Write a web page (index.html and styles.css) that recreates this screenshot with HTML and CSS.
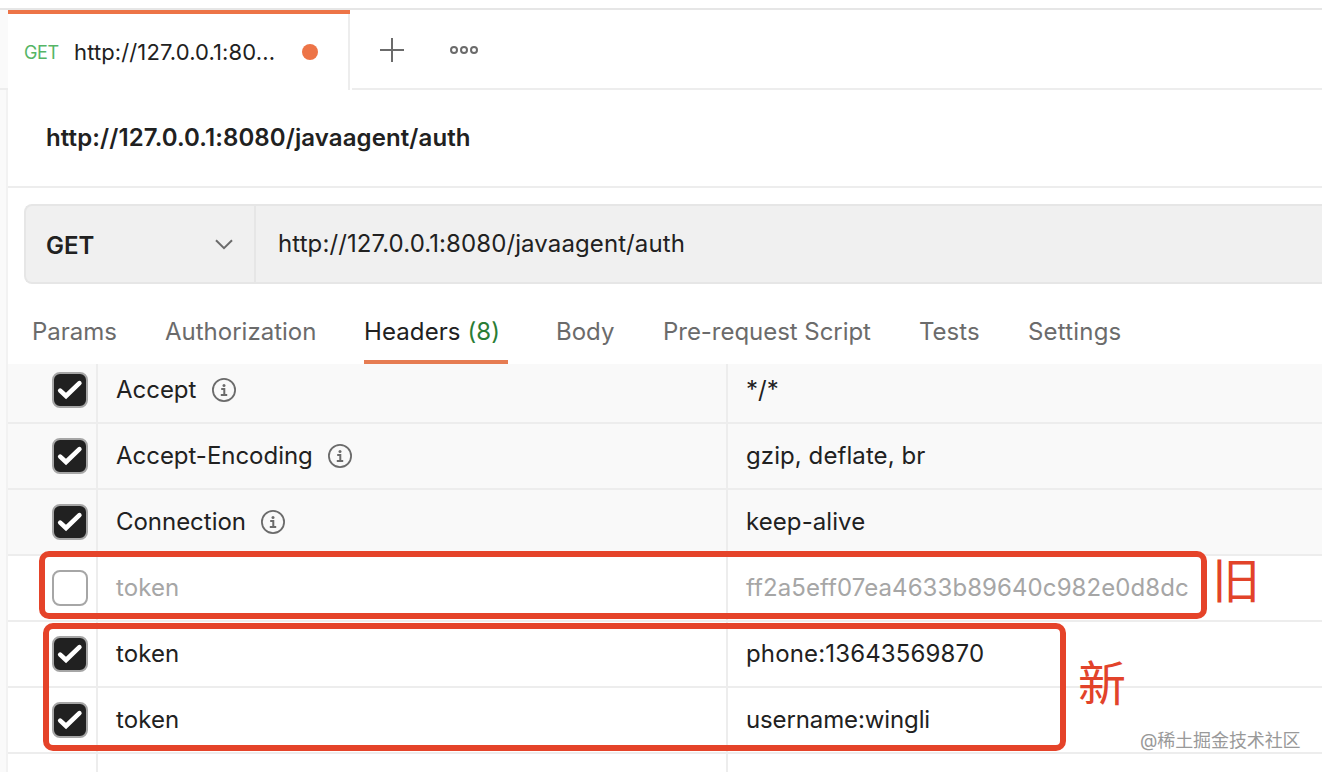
FILE: index.html
```
<!DOCTYPE html>
<html lang="en">
<head>
    <meta charset="UTF-8">
    <meta name="viewport" content="width=device-width, initial-scale=1.0">
    <title>http://127.0.0.1:8080/javaagent/auth</title>
    <link rel="stylesheet" href="styles.css">
</head>
<body>
    <!-- Shared icons -->
    <svg class="icon-defs" width="0" height="0">
        <symbol id="icon-check" viewBox="0 0 32 32">
            <path d="M6.2 16.6 L12 22 L25.4 9.2" fill="none" stroke="#fff" stroke-width="4.6" stroke-linecap="round" stroke-linejoin="miter"/>
        </symbol>
        <symbol id="icon-info" viewBox="0 0 24 24">
            <circle cx="12" cy="12" r="11.1" fill="none" stroke="#6b6b6b" stroke-width="1.8"/>
            <path d="M9.2 11 H12.3 V17 M8.8 17 H15.2" fill="none" stroke="#6b6b6b" stroke-width="2"/>
            <circle cx="12" cy="7.4" r="1.5" fill="#6b6b6b"/>
        </symbol>
    </svg>

    <div id="tab-bar">
        <div class="tab">
            <span class="tab-method">GET</span>
            <span class="tab-title">http://127.0.0.1:80...</span>
            <span class="unsaved"></span>
        </div>
        <div class="tab-actions">
            <svg width="24" height="24" viewBox="0 0 24 24"><path d="M12 0 V24 M0 12 H24" stroke="#6b6b6b" stroke-width="2"/></svg>
            <svg width="28" height="8" viewBox="0 0 28 8" fill="none" stroke="#6b6b6b" stroke-width="2">
                <circle cx="4" cy="4" r="3"/>
                <circle cx="14" cy="4" r="3"/>
                <circle cx="24" cy="4" r="3"/>
            </svg>
        </div>
    </div>

    <div id="content">
        <div class="request-name"><span>http://127.0.0.1:8080/javaagent/auth</span></div>

        <div class="url-bar">
            <div class="method">
                <span>GET</span>
                <svg width="18" height="11" viewBox="0 0 18 11"><path d="M1 1.2 L9 9.2 L17 1.2" fill="none" stroke="#6b6b6b" stroke-width="2"/></svg>
            </div>
            <div class="url"><span>http://127.0.0.1:8080/javaagent/auth</span></div>
        </div>

        <div class="request-tabs">
            <div class="params">Params</div>
            <div class="authorization">Authorization</div>
            <div class="active">Headers <span class="count">(8)</span></div>
            <div class="body-tab">Body</div>
            <div class="script">Pre-request Script</div>
            <div class="tests">Tests</div>
            <div class="settings">Settings</div>
        </div>

        <div class="headers">
            <div class="row auto first">
                <div class="cell"><svg class="checkbox checked"><use href="#icon-check"/></svg></div>
                <div class="cell key"><span>Accept</span><svg class="info"><use href="#icon-info"/></svg></div>
                <div class="cell"><span>*/*</span></div>
            </div>
            <div class="row auto">
                <div class="cell"><svg class="checkbox checked"><use href="#icon-check"/></svg></div>
                <div class="cell key"><span>Accept-Encoding</span><svg class="info"><use href="#icon-info"/></svg></div>
                <div class="cell"><span>gzip, deflate, br</span></div>
            </div>
            <div class="row auto">
                <div class="cell"><svg class="checkbox checked"><use href="#icon-check"/></svg></div>
                <div class="cell key"><span>Connection</span><svg class="info"><use href="#icon-info"/></svg></div>
                <div class="cell"><span>keep-alive</span></div>
            </div>
            <div class="row disabled">
                <div class="cell"><div class="checkbox"></div></div>
                <div class="cell"><span>token</span></div>
                <div class="cell"><span>ff2a5eff07ea4633b89640c982e0d8dc</span></div>
            </div>
            <div class="row">
                <div class="cell"><svg class="checkbox checked"><use href="#icon-check"/></svg></div>
                <div class="cell"><span>token</span></div>
                <div class="cell"><span class="digits">phone:13643569870</span></div>
            </div>
            <div class="row">
                <div class="cell"><svg class="checkbox checked"><use href="#icon-check"/></svg></div>
                <div class="cell"><span>token</span></div>
                <div class="cell"><span class="username">username:wingli</span></div>
            </div>
            <div class="row last">
                <div class="cell"></div>
                <div class="cell"></div>
                <div class="cell"></div>
            </div>
        </div>
    </div>

    <!-- Annotations on top of the table -->
    <div class="mark mark-old"></div>
    <div class="mark mark-new"></div>
    <div class="label label-old">旧</div>
    <div class="label label-new">新</div>
    <div class="watermark">@稀土掘金技术社区</div>
</body>
</html>
```
FILE: styles.css
```
* {
    box-sizing: border-box;
}
body {
    font-family: Inter, "Noto Sans CJK SC", sans-serif;
    font-size: 24px;
    letter-spacing: 0.08px;
    color: #212121;
    background: #fff;
    margin: 0;
    width: 1322px;
    height: 772px;
    overflow: hidden;
    position: relative;
    white-space: nowrap;
}
svg {
    display: block;
    flex-shrink: 0;
}
.icon-defs {
    position: absolute;
}
#tab-bar {
    display: flex;
    margin-top: 8px;
    height: 82px;
    padding-left: 8px;
    border-top: 2px solid #e6e6e6;
    background: linear-gradient(#ededed, #ededed) 0 78px / 8px 2px no-repeat, linear-gradient(#fafafa, #fafafa) 0 0 / 8px 100% no-repeat;
}
.tab {
    display: flex;
    align-items: center;
    width: 342px;
    height: 80px;
    padding: 0 0 0 16px;
    border-top: 4px solid #ed7447;
    background: linear-gradient(#ededed, #ededed) 340px 0 / 2px 100% no-repeat;
}
.tab-method {
    width: 50px;
    font-size: 18px;
    letter-spacing: -0.4px;
    color: #55b566;
}
.tab-title {
    width: 228px;
    font-size: 22px;
    letter-spacing: 0.12px;
}
.unsaved {
    width: 16px;
    height: 16px;
    border-radius: 50%;
    background: #ed7447;
}
.tab-actions {
    flex-grow: 1;
    display: flex;
    align-items: center;
    gap: 46px;
    margin-left: 2px;
    padding: 2px 0 0 28px;
    border-bottom: 2px solid #ededed;
}
#content {
    height: 682px;
    padding-left: 6px;
    background: linear-gradient(90deg, #fafafa 6px, #f2f2f2 6px, #f2f2f2 8px, #fff 8px);
}
.request-name {
    display: flex;
    align-items: center;
    height: 98px;
    margin-left: 2px;
    padding: 0 0 2px 38px;
    border-bottom: 2px solid #ededed;
    font-weight: 600;
    letter-spacing: 0.1px;
}
.url-bar {
    display: flex;
    height: 80px;
    margin: 16px 0 0 18px;
    border: 2px solid #e6e6e6;
    border-right: none;
    border-radius: 8px 0 0 8px;
    background: #f0f0f0;
}
.method {
    display: flex;
    align-items: center;
    justify-content: space-between;
    width: 230px;
    padding: 0 21px 0 20px;
    border-right: 2px solid #e6e6e6;
    font-weight: 600;
    letter-spacing: 0;
}
.method span {
    padding-top: 2px;
}
.url {
    display: flex;
    align-items: center;
    padding: 0 0 2px 22px;
    letter-spacing: 0.1px;
}
.request-tabs {
    display: flex;
    height: 80px;
    padding-left: 26px;
    line-height: 96px;
    letter-spacing: 0;
    color: #6b6b6b;
}
.params {
    width: 133px;
}
.authorization {
    width: 199px;
}
.active {
    width: 144px;
    margin-right: 48px;
    border-bottom: 4px solid #e67c52;
    letter-spacing: 0.1px;
    color: #212121;
}
.count {
    color: #2a7d35;
}
.body-tab {
    width: 107px;
}
.script {
    width: 256px;
    letter-spacing: -0.04px;
}
.tests {
    width: 109px;
}
.settings {
    letter-spacing: 0.2px;
}
.headers {
    margin-left: 2px;
}
.row {
    display: grid;
    grid-template-columns: 90px 630px 1fr;
    height: 66px;
    border-bottom: 2px solid #ededed;
}
.auto {
    background: #f9f9f9;
}
.first {
    height: 60px;
}
.first .cell {
    padding-bottom: 6px;
}
.last {
    height: 20px;
    border-bottom: none;
}
.cell {
    display: flex;
    align-items: center;
    padding-left: 18px;
}
.cell span {
    padding-bottom: 2px;
}
.cell:first-child {
    padding-left: 44px;
}
.cell:not(:last-child) {
    border-right: 2px solid #ededed;
}
.key {
    letter-spacing: -0.03px;
}
.digits {
    letter-spacing: 0.15px;
}
.username {
    letter-spacing: -0.12px;
}
.info {
    width: 24px;
    height: 24px;
    margin-left: 15.5px;
}
.checkbox {
    width: 36px;
    height: 36px;
    border: 2px solid #a6a6a6;
    border-radius: 8px;
    flex-shrink: 0;
}
.checked {
    background: #212121;
}
.disabled {
    color: #a6a6a6;
}
.mark {
    position: absolute;
    border: 6px solid #e54329;
    border-radius: 10px;
}
.mark-old {
    left: 39px;
    top: 551px;
    width: 1168px;
    height: 68px;
}
.mark-new {
    left: 43px;
    top: 623px;
    width: 1023px;
    height: 128px;
}
.label {
    position: absolute;
    font-family: "Noto Sans CJK SC", sans-serif;
    font-size: 48px;
    line-height: 60px;
    letter-spacing: 0;
    color: #e2432a;
}
.label-old {
    left: 1212px;
    top: 547px;
}
.label-new {
    left: 1078px;
    top: 650px;
}
.watermark {
    position: absolute;
    left: 1140px;
    top: 728px;
    font-size: 18px;
    line-height: 26px;
    letter-spacing: -0.1px;
    color: #999;
}
```
